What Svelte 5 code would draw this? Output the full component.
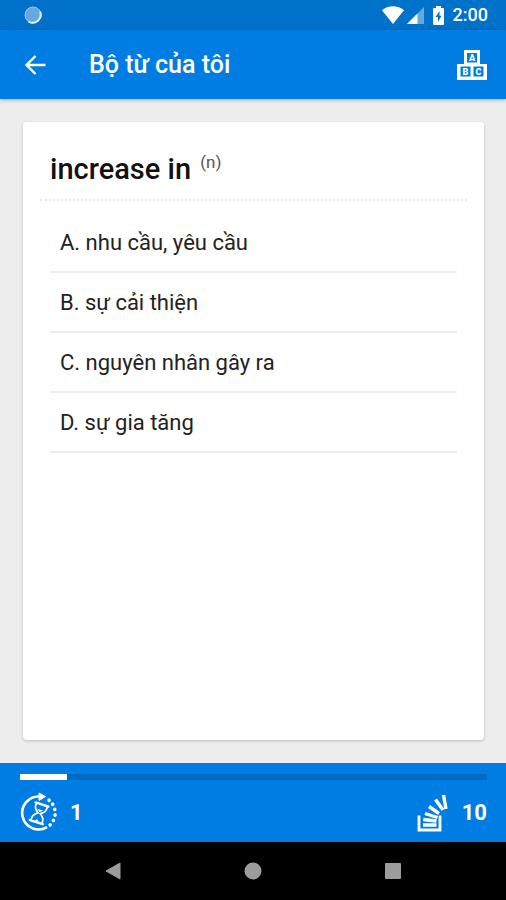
<script lang="ts">
  // Props
  export let title: string = 'Bộ từ của tôi';
  export let word: string = 'increase in';
  export let wordType: string = 'n';
  export let current: number = 1;
  export let total: number = 10;
  export let clock: string = '2:00';
  export let answers: string[] = [
    'nhu cầu, yêu cầu',
    'sự cải thiện',
    'nguyên nhân gây ra',
    'sự gia tăng'
  ];

  let selected: number | null = null;

  $: percentage = Math.min(100, Math.max(0, (current / total) * 100));

  // 0 -> A, 1 -> B, ...
  function letter(index: number): string {
    return String.fromCharCode(65 + index);
  }
</script>

<div class="screen">
  <div class="status-bar">
    <svg class="status-dot" width="18" height="18" viewBox="0 0 18 18" aria-hidden="true">
      <circle cx="9" cy="9" r="8" fill="#66a9e0" />
      <circle cx="9" cy="9" r="8" fill="none" stroke="#9ac7ec" stroke-width="1" />
      <path d="M16 5.500A8 8 0 0 1 4.500 15.500" fill="none" stroke="#e0effa" stroke-width="2" />
    </svg>
    <div class="status-icons">
      <svg width="22" height="18" viewBox="0 0 22 18" aria-hidden="true">
        <path d="M0 4.2C6.2-1 15.800-1 22 4.200L11 18Z" fill="#fff" />
      </svg>
      <svg width="17" height="18" viewBox="0 0 17 18" aria-hidden="true">
        <path d="M17 1V18H0Z" fill="#66a9e0" />
        <path d="M10.500 7.500V18H0Z" fill="#fff" />
      </svg>
      <svg class="battery" width="11" height="19" viewBox="0 0 11 19" aria-hidden="true">
        <path d="M3 0h5v2h2q1 0 1 1v15q0 1-1 1H1q-1 0-1-1V3q0-1 1-1h2Z" fill="#fff" />
        <path d="M6.500 5 2.500 11H5V16L8.500 9.700H6.500Z" fill="#0072ca" />
      </svg>
      <span class="clock">{clock}</span>
    </div>
  </div>

  <header class="app-bar">
    <button class="icon-button" type="button" aria-label="Quay lại">
      <svg width="22" height="22" viewBox="0 0 22 22" aria-hidden="true">
        <path d="M21.500 11H3M11.500 2 2.500 11l9 9" fill="none" stroke="#fff" stroke-width="2.400" />
      </svg>
    </button>
    <h1 class="title">{title}</h1>
    <button class="icon-button" type="button" aria-label="Bảng chữ cái">
      <svg class="blocks" width="30" height="30" viewBox="0 0 30 30" aria-hidden="true">
        <path
          d="M7 0H23V14H30V30H0V14H7ZM10 3V12.500H20V3ZM3.500 16.500V26.500H13.500V16.500ZM16.500 16.500V26.500H26.500V16.500Z"
          fill="#fff"
          fill-rule="evenodd"
        />
        <text x="15" y="10.500">A</text>
        <text x="8.500" y="24.500">B</text>
        <text x="21.500" y="24.500">C</text>
      </svg>
    </button>
  </header>

  <main class="content">
    <section class="card">
      <h2 class="word">{word} <sup class="word-type">({wordType})</sup></h2>
      <ul class="answers">
        {#each answers as answer, i}
          <li>
            <button
              class="answer"
              type="button"
              aria-pressed={selected === i}
              on:click={() => (selected = i)}
            >
              {letter(i)}. {answer}
            </button>
          </li>
        {/each}
      </ul>
    </section>
  </main>

  <footer class="footer">
    <div
      class="progress"
      role="progressbar"
      aria-label="Tiến độ"
      aria-valuenow={current}
      aria-valuemin={0}
      aria-valuemax={total}
    >
      <div class="progress-fill" style="width: {percentage}%"></div>
    </div>
    <div class="counters">
      <div class="counter">
        <svg width="38" height="38" viewBox="0 0 38 38" fill="none" stroke="#fff" aria-hidden="true">
          <path d="M27 33.200A16.500 16.500 0 1 1 20 2.500" stroke-width="2.600" />
          <path d="M19-1 25.500 2.500 19 6.500Z" fill="#fff" />
          <path
            d="M29 6.200A16.500 16.500 0 0 1 28.500 32.300"
            stroke-width="3.600"
            stroke-linecap="round"
            stroke-dasharray="0.100 5.400"
          />
          <g transform="rotate(18 19 19)" stroke-width="1.700">
            <path d="M12.500 10H26M12.500 28.500H26" stroke-width="2.400" stroke-linecap="round" />
            <path d="M13.500 10.500V13Q13.500 16 18 19.200Q13.500 22.500 13.500 25.500V28M25 10.500V13Q25 16 20.500 19.200Q25 22.500 25 25.500V28" />
            <path d="M16 15.500H22.500L19.200 18ZM17 27.500 19.200 25.500 21.500 27.500Z" fill="#fff" stroke="none" />
          </g>
        </svg>
        <span>{current}</span>
      </div>
      <div class="counter counter-total">
        <svg width="30" height="37" viewBox="0 0 30 37" fill="none" stroke="#fff" aria-hidden="true">
          <path d="M2 20.500V35H23V20.500" stroke-width="2.800" />
          <path
            d="M6 30H19.500M6.300 24.500 19.500 26M8 18.500 20.500 22.500M12 11.500 22 18.500M18.500 4.500 26 15M26.500 0 29 14"
            stroke-width="3.400"
          />
        </svg>
        <span>{total}</span>
      </div>
    </div>
  </footer>

  <nav class="system-nav" aria-label="Điều hướng hệ thống">
    <button type="button" aria-label="Trở về">
      <svg width="18" height="18" viewBox="0 0 18 18" aria-hidden="true">
        <path d="M16 1V17L2 9Z" fill="#9c9c9c" stroke="#9c9c9c" stroke-linejoin="round" />
      </svg>
    </button>
    <button type="button" aria-label="Màn hình chính">
      <svg width="18" height="18" viewBox="0 0 18 18" aria-hidden="true">
        <circle cx="9" cy="9" r="8.500" fill="#9c9c9c" />
      </svg>
    </button>
    <button type="button" aria-label="Ứng dụng gần đây">
      <svg width="18" height="18" viewBox="0 0 18 18" aria-hidden="true">
        <rect x="1" y="1" width="16" height="16" rx="1" fill="#9c9c9c" />
      </svg>
    </button>
  </nav>
</div>

<style>
  :global(body) {
    background: #ededed;
  }

  .screen {
    display: flex;
    flex-direction: column;
    min-height: 100vh;
    font-family: Roboto, 'Noto Sans', sans-serif;
    background: #ededed;
  }

  button {
    padding: 0;
    border: 0;
    background: none;
    font: inherit;
    color: inherit;
    cursor: pointer;
  }

  svg {
    display: block;
    flex: none;
    overflow: visible;
  }

  /* Status bar */
  .status-bar {
    display: flex;
    justify-content: space-between;
    align-items: center;
    height: 30px;
    padding: 0 18px 0 24px;
    background: #0072ca;
    color: #fff;
  }

  .status-icons {
    display: flex;
    align-items: center;
    gap: 3px;
  }

  .battery {
    margin: 0 6px;
  }

  .clock {
    font-size: 18px;
    font-weight: 500;
    line-height: 20px;
  }

  /* App bar */
  .app-bar {
    display: flex;
    align-items: center;
    height: 69px;
    padding: 0 19px 0 24px;
    background: #007de3;
    color: #fff;
    box-shadow: 0 1px 4px rgba(0, 0, 0, 0.3);
  }

  .title {
    flex: 1;
    margin: 0 0 0 43px;
    font-size: 25px;
    font-weight: 500;
    line-height: 32px;
  }

  .blocks text {
    fill: #fff;
    font-size: 9px;
    font-weight: 900;
    text-anchor: middle;
  }

  /* Word card */
  .content {
    display: flex;
    flex: 1;
    padding: 23px 22px 23px 23px;
  }

  .card {
    flex: 1;
    padding: 0 17px;
    border-radius: 4px;
    background: #fff;
    box-shadow: 0 1px 3px rgba(0, 0, 0, 0.2);
  }

  .word {
    margin: 0;
    padding: 27px 10px 10px;
    border-bottom: 2px dotted #e9e9e9;
    font-size: 29px;
    font-weight: 500;
    line-height: 40px;
    color: #111;
  }

  .word-type {
    margin-left: 2px;
    font-size: 17px;
    font-weight: 400;
    line-height: 0;
    color: #555;
  }

  .answers {
    margin: 0;
    padding: 12px 10px 0;
    list-style: none;
  }

  .answer {
    width: 100%;
    height: 60px;
    padding: 2px 10px 0;
    border-bottom: 2px solid #eee;
    font-size: 22px;
    line-height: 28px;
    text-align: left;
    color: #222;
  }

  .answers li {
    display: flex;
  }

  /* Footer */
  .footer {
    padding: 11px 19px 10px 20px;
    background: #007de3;
    color: #fff;
  }

  .progress {
    height: 6px;
    background: #006bc2;
  }

  .progress-fill {
    height: 100%;
    background: #fff;
  }

  .counters {
    display: flex;
    justify-content: space-between;
    padding-top: 14px;
  }

  .counter {
    display: flex;
    align-items: center;
    gap: 12px;
    font-size: 22px;
    font-weight: 700;
    line-height: 28px;
  }

  .counter-total {
    gap: 15px;
  }

  /* System navigation */
  .system-nav {
    display: flex;
    justify-content: center;
    gap: 122px;
    height: 58px;
    background: #000;
  }
</style>
